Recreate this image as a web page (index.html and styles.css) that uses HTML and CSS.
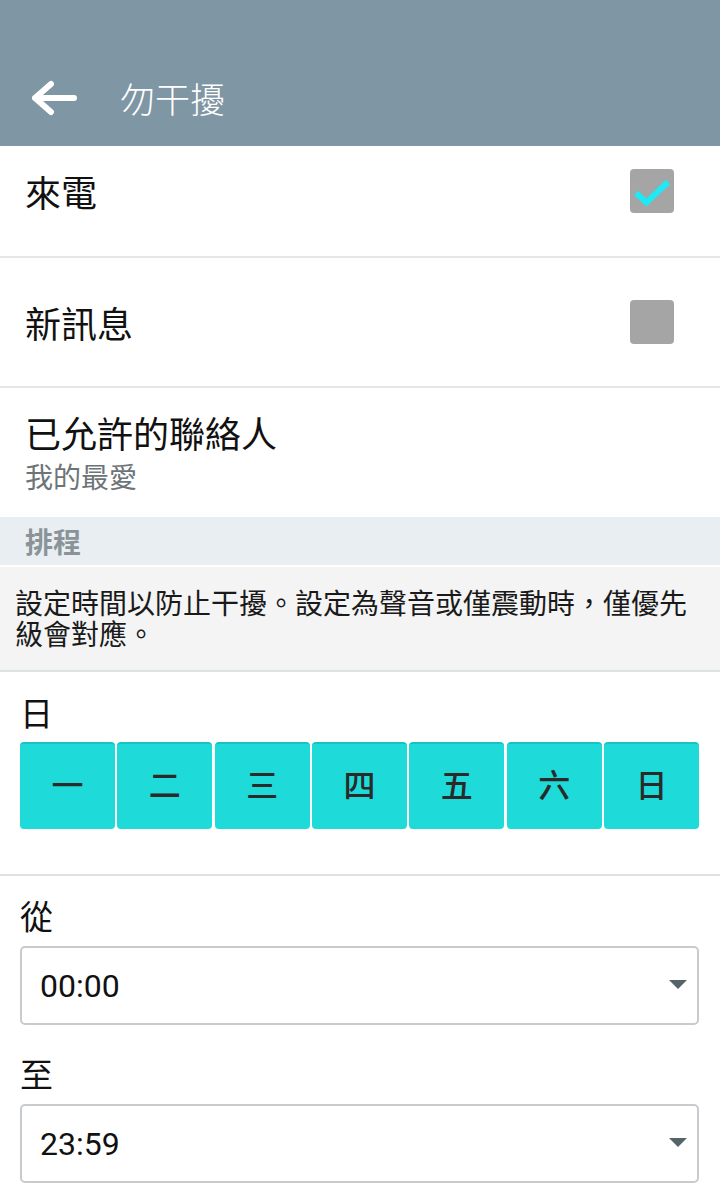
FILE: index.html
```html
<!DOCTYPE html>
<html lang="zh-Hant">
<head>
<meta charset="utf-8">
<title>勿干擾</title>
<link rel="stylesheet" href="styles.css">
</head>
<body>
<header class="appbar">
  <svg class="back" width="60" height="40" viewBox="0 0 60 40" aria-hidden="true">
    <path d="M16 27 H55 M32 13 L16 27 L32 41" fill="none" stroke="#fff" stroke-width="6" stroke-linecap="round" stroke-linejoin="round" transform="translate(0,-7)"/>
  </svg>
  <h1 class="title">勿干擾</h1>
</header>

<div class="row row-first">
  <span class="row-title">來電</span>
  <span class="checkbox">
    <svg width="44" height="44" viewBox="0 0 44 44" aria-hidden="true">
      <path d="M6 24 L16.5 33.5 L38 13" fill="none" stroke="#1ee9f4" stroke-width="6" stroke-linecap="butt" stroke-linejoin="miter"/>
    </svg>
  </span>
</div>
<div class="row">
  <span class="row-title">新訊息</span>
  <span class="checkbox"></span>
</div>
<div class="row row-stack">
  <span class="row-title">已允許的聯絡人</span>
  <span class="row-sub">我的最愛</span>
</div>

<div class="section-head">排程</div>
<div class="desc">設定時間以防止干擾。設定為聲音或僅震動時，僅優先級會對應。</div>

<div class="block block-days">
  <div class="label label-day">日</div>
  <div class="days">
    <button class="day">一</button>
    <button class="day">二</button>
    <button class="day">三</button>
    <button class="day">四</button>
    <button class="day">五</button>
    <button class="day">六</button>
    <button class="day">日</button>
  </div>
</div>

<div class="block block-time">
  <div class="label">從</div>
  <div class="select"><span class="value">00:00</span><span class="caret"></span></div>
  <div class="label label-to">至</div>
  <div class="select"><span class="value">23:59</span><span class="caret"></span></div>
</div>
</body>
</html>
```

FILE: styles.css
```css
* { box-sizing: border-box; }

html, body {
  margin: 0;
  padding: 0;
  background: #fff;
}

body {
  width: 720px;
  font-family: "Noto Sans CJK TC", "Noto Sans", sans-serif;
  color: #111;
}

.appbar {
  height: 146px;
  background: #7f96a4;
  display: flex;
  align-items: center;
  padding: 50px 0 0 19px;
}

.back {
  display: block;
  flex: none;
}

.title {
  margin: 0 0 0 41px;
  font-size: 35px;
  font-weight: 300;
  color: #fff;
  line-height: 40px;
}

.row {
  display: flex;
  align-items: center;
  justify-content: space-between;
  height: 130px;
  padding: 0 46px 0 25px;
  border-bottom: 2px solid #e6e6e6;
}

.row-first {
  height: 112px;
  padding-bottom: 20px;
}

.row-title {
  font-size: 36px;
  line-height: 44px;
  color: #111;
}

.checkbox {
  width: 44px;
  height: 44px;
  border-radius: 4px;
  background: #a5a5a5;
  display: block;
}

.checkbox svg { display: block; }

.row-stack {
  flex-direction: column;
  align-items: flex-start;
  justify-content: flex-start;
  height: 129px;
  padding-top: 22px;
  border-bottom: none;
}

.row-sub {
  font-size: 28px;
  line-height: 44px;
  color: #6d7477;
}

.section-head {
  height: 50px;
  line-height: 48px;
  padding-left: 25px;
  background: #e8eef1;
  border-bottom: 2px solid #fff;
  font-size: 28px;
  font-weight: 700;
  color: #8a9498;
}

.desc {
  background: #f4f4f4;
  padding: 20px 15px 21px;
  font-size: 28px;
  line-height: 31px;
  color: #1a1a1a;
  border-bottom: 2px solid #dde2e2;
}

.block {
  padding: 0 21px 0 20px;
}

.block-days {
  padding-top: 20px;
  padding-bottom: 45px;
  border-bottom: 2px solid #dde1e1;
}

.label {
  font-size: 33px;
  line-height: 40px;
  color: #111;
}

.label-day { margin-bottom: 10px; }

.days {
  display: grid;
  grid-template-columns: repeat(7, 1fr);
  gap: 2.4px;
}

.day {
  height: 87px;
  border: none;
  border-top: 2px solid #17c2c2;
  border-radius: 4px;
  background: #1edbd9;
  font-family: "Noto Sans CJK TC", sans-serif;
  font-size: 32px;
  font-weight: 500;
  color: #2a2a2a;
  padding: 0 0 8px;
}

.block-time {
  padding-top: 19px;
}

.block-time .label { margin-bottom: 11px; }
.block-time .label-to { margin-top: 28px; }

.select {
  height: 79px;
  border: 2px solid #c8cbce;
  border-radius: 5px;
  display: flex;
  align-items: center;
  justify-content: space-between;
  padding: 0 10px 0 18px;
}

.value {
  font-family: Roboto, "Liberation Sans", sans-serif;
  font-size: 32px;
  color: #111;
}

.caret {
  width: 0;
  height: 0;
  border-left: 9px solid transparent;
  border-right: 9px solid transparent;
  border-top: 9px solid #56636b;
  margin-top: -2px;
}
```
